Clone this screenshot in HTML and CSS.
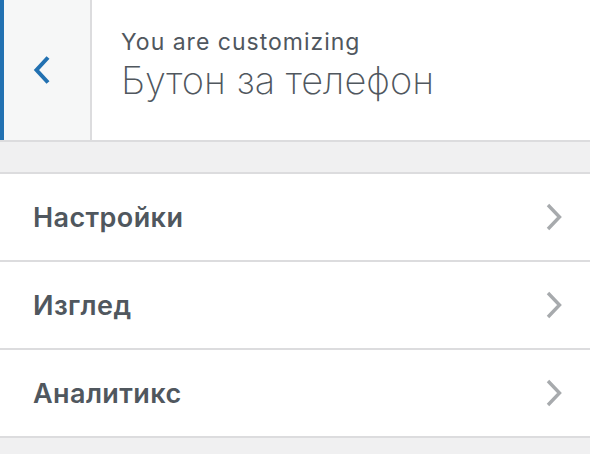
FILE: index.html
```html
<!DOCTYPE html>
<html lang="bg">
<head>
<meta charset="utf-8">
<title>Customizer</title>
<link rel="stylesheet" href="styles.css">
</head>
<body>
<div class="panel">
  <header class="head">
    <button class="back" aria-label="Back">
      <svg class="back-icon" width="18" height="30" viewBox="0 0 18 30"><polyline points="15,2.5 3.5,15 15,27.5" fill="none" stroke="#2271b1" stroke-width="4"/></svg>
    </button>
    <div class="info">
      <span class="action">You are customizing</span>
      <h1 class="title">Бутон за телефон</h1>
    </div>
  </header>
  <div class="gap"></div>
  <ul class="sections">
    <li class="section"><span class="section-title">Настройки</span><svg class="chev" width="18" height="28" viewBox="0 0 18 28"><polyline points="3,2 14.5,14 3,26" fill="none" stroke="#a7aaad" stroke-width="3.4"/></svg></li>
    <li class="section"><span class="section-title">Изглед</span><svg class="chev" width="18" height="28" viewBox="0 0 18 28"><polyline points="3,2 14.5,14 3,26" fill="none" stroke="#a7aaad" stroke-width="3.4"/></svg></li>
    <li class="section"><span class="section-title">Аналитикс</span><svg class="chev" width="18" height="28" viewBox="0 0 18 28"><polyline points="3,2 14.5,14 3,26" fill="none" stroke="#a7aaad" stroke-width="3.4"/></svg></li>
  </ul>
</div>
</body>
</html>
```
FILE: styles.css
```css
* { box-sizing: border-box; }
html, body {
  margin: 0;
  padding: 0;
  background: #f0f0f1;
  font-family: Inter, "Noto Sans", "Liberation Sans", sans-serif;
  color: #50575e;
}
.panel {
  width: 590px;
  height: 454px;
  overflow: hidden;
  background: #f0f0f1;
}
.head {
  display: flex;
  height: 142px;
  background: #fff;
  border-bottom: 2px solid #dcdcde;
}
.back {
  width: 92px;
  height: 140px;
  margin: 0;
  padding: 0 0 0 29px;
  display: flex;
  align-items: center;
  background: #f6f7f7;
  border: none;
  border-left: 4px solid #2271b1;
  border-right: 2px solid #dcdcde;
  cursor: pointer;
}
.back-icon { display: block; }
.info {
  display: flex;
  flex-direction: column;
  padding: 29px 0 0 29px;
}
.action {
  display: block;
  font-size: 23px;
  line-height: 27px;
  font-weight: 400;
  letter-spacing: 1px;
  color: #50575e;
}
.title {
  margin: 2px 0 0;
  font-size: 38px;
  line-height: 44px;
  font-weight: 200;
  color: #50575e;
}
.gap {
  height: 32px;
  border-bottom: 2px solid #dcdcde;
}
.sections {
  list-style: none;
  margin: 0;
  padding: 0;
}
.section {
  display: flex;
  align-items: center;
  justify-content: space-between;
  height: 88px;
  padding: 0 27px 0 33px;
  background: #fff;
  border-bottom: 2px solid #dcdcde;
}
.section-title {
  font-size: 27px;
  font-weight: 600;
  letter-spacing: 0.4px;
  color: #50575e;
}
.chev { display: block; }
```
